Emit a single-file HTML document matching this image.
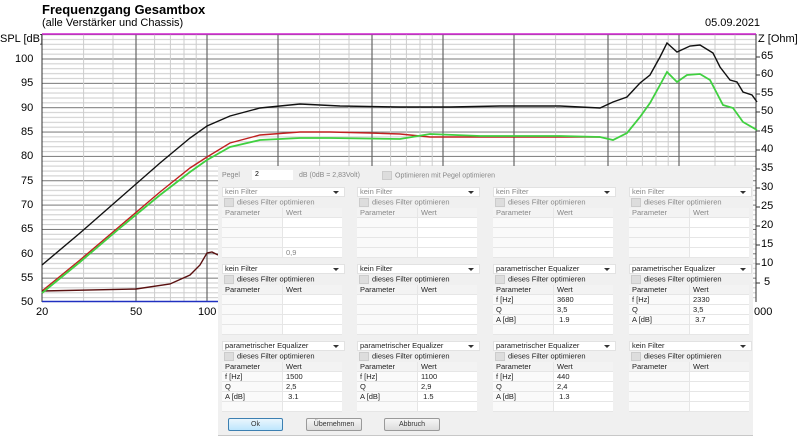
<!DOCTYPE html>
<html><head><meta charset="utf-8"><style>
body{margin:0;width:800px;height:447px;overflow:hidden;background:#fff;font-family:"Liberation Sans",sans-serif;position:relative}
.a{position:absolute;white-space:nowrap}
.t{font-size:11px;color:#000}
#dlg{position:absolute;left:218px;top:166px;width:535px;height:269px;background:#f0f0f0;border-bottom:1px solid #c8c8c8}
.p{position:absolute;width:121px;height:70px;font-size:7.5px;color:#222}
.dd{position:absolute;left:0;top:0;width:119px;height:8px;background:#fff;border:1px solid #e2e2e2;line-height:8px;padding-left:2px;box-sizing:content-box}
.dd:after{content:"";position:absolute;right:5px;top:3px;border:3px solid transparent;border-top:3px solid #333;border-bottom:0}
.cb{position:absolute;left:2px;top:11px;line-height:8px}
.cb i{display:inline-block;width:8px;height:7px;background:#ddd;border:1px solid #ccc;vertical-align:middle;margin-right:3px}
.tb{position:absolute;left:0;top:21px;width:121px}
.r{height:10px;line-height:10px;display:flex}
.r span{display:block;width:60px;padding-left:3px;box-sizing:border-box;border-bottom:1px solid #e6e6e6}
.r span:first-child{background:#fafafa}
.r span+span{background:#fff;border-left:1px solid #e6e6e6}
.h span{background:#f3f3f3!important}
.lt{color:#888}
.btn{position:absolute;top:252px;height:11px;border:1px solid #9a9a9a;background:linear-gradient(#f6f6f6,#dcdcdc);font-size:7px;text-align:center;line-height:11px;border-radius:2px;color:#333}
</style></head><body>
<div class="a" style="left:42px;top:2px;font-size:13px;font-weight:bold">Frequenzgang Gesamtbox</div>
<div class="a t" style="left:42px;top:17px;font-size:11px">(alle Verstärker und Chassis)</div>
<div class="a t" style="left:705px;top:17px">05.09.2021</div>
<div class="a t" style="left:0px;top:33px">SPL [dB]</div>
<div class="a t" style="left:758px;top:33px">Z [Ohm]</div>
<svg class="a" style="left:0;top:0" width="800" height="447">
<defs>
<pattern id="hp" x="0" y="302" width="800" height="24.35" patternUnits="userSpaceOnUse">
<line x1="0" x2="800" y1="0.5" y2="0.5" stroke="#777" stroke-width="1"/>
<line x1="0" x2="800" y1="5.37" y2="5.37" stroke="#ccc"/>
<line x1="0" x2="800" y1="10.24" y2="10.24" stroke="#ccc"/>
<line x1="0" x2="800" y1="15.11" y2="15.11" stroke="#ccc"/>
<line x1="0" x2="800" y1="19.98" y2="19.98" stroke="#ccc"/>
</pattern>
</defs>
<rect x="42" y="34" width="714" height="267" fill="url(#hp)"/>
<g stroke="#ccc" stroke-width="1">
<line x1="83.6" x2="83.6" y1="34" y2="301"/><line x1="113" x2="113" y1="34" y2="301"/>
<line x1="154.6" x2="154.6" y1="34" y2="301"/><line x1="170.4" x2="170.4" y1="34" y2="301"/>
<line x1="184" x2="184" y1="34" y2="301"/><line x1="196.2" x2="196.2" y1="34" y2="301"/>
<line x1="319.6" x2="319.6" y1="34" y2="301"/><line x1="349" x2="349" y1="34" y2="301"/>
<line x1="390.6" x2="390.6" y1="34" y2="301"/><line x1="406.4" x2="406.4" y1="34" y2="301"/>
<line x1="420" x2="420" y1="34" y2="301"/><line x1="432.2" x2="432.2" y1="34" y2="301"/>
<line x1="555.6" x2="555.6" y1="34" y2="301"/><line x1="585" x2="585" y1="34" y2="301"/>
<line x1="626.6" x2="626.6" y1="34" y2="301"/><line x1="642.4" x2="642.4" y1="34" y2="301"/>
<line x1="656" x2="656" y1="34" y2="301"/><line x1="668.2" x2="668.2" y1="34" y2="301"/>
<line x1="715" x2="715" y1="34" y2="301"/><line x1="735" x2="735" y1="34" y2="301"/>
</g>
<g stroke="#666" stroke-width="1.2">
<line x1="136" x2="136" y1="34" y2="301"/><line x1="207" x2="207" y1="34" y2="301"/>
<line x1="278" x2="278" y1="34" y2="301"/><line x1="372" x2="372" y1="34" y2="301"/>
<line x1="443" x2="443" y1="34" y2="301"/><line x1="514" x2="514" y1="34" y2="301"/>
<line x1="608" x2="608" y1="34" y2="301"/><line x1="679" x2="679" y1="34" y2="301"/>
</g>
<line x1="42" x2="42" y1="34" y2="302" stroke="#333"/>
<line x1="756" x2="756" y1="34" y2="302" stroke="#333"/>
<line x1="42" x2="756" y1="34" y2="34" stroke="#d020d0" stroke-width="1.5"/>
<line x1="42" x2="220" y1="301.5" y2="301.5" stroke="#2030c0" stroke-width="1.5"/>
<g stroke="#333">
<line x1="756" x2="760" y1="57" y2="57"/><line x1="756" x2="760" y1="75" y2="75"/><line x1="756" x2="760" y1="94" y2="94"/><line x1="756" x2="760" y1="112" y2="112"/><line x1="756" x2="760" y1="131" y2="131"/><line x1="756" x2="760" y1="150" y2="150"/><line x1="756" x2="760" y1="169" y2="169"/><line x1="756" x2="760" y1="188" y2="188"/><line x1="756" x2="760" y1="207" y2="207"/><line x1="756" x2="760" y1="226" y2="226"/><line x1="756" x2="760" y1="245" y2="245"/><line x1="756" x2="760" y1="264" y2="264"/><line x1="756" x2="760" y1="283" y2="283"/>
</g>
<polyline fill="none" stroke="#111" stroke-width="1.4" points="42,265 80,233 120,198 160,163 190,138 207,126 230,116 260,108 300,104 340,106 400,107 450,107 500,106 560,106 600,108 613,102 627,97 640,83 650,75 660,57 667,43 677,52 690,46 700,45 713,53 720,67 730,80 737,82 743,92 752,95 757,102"/>
<polyline fill="none" stroke="#c02020" stroke-width="1.4" points="42,291 80,260 120,226 160,192 190,168 207,157 230,143 260,135 300,132 330,132 370,133 400,134 430,137 480,137 560,137 600,137"/>
<polyline fill="none" stroke="#5a1010" stroke-width="1.4" points="42,291 136,289 170,284 190,275 200,265 207,253 212,252 218,255"/>
<polyline fill="none" stroke="#40d040" stroke-width="1.8" points="42,293 80,262 120,228 160,195 190,172 207,160 230,147 260,140 300,138 330,138 400,139 430,134 480,136 560,136 600,137 613,140 627,133 640,117 650,103 660,85 667,72 677,82 687,75 700,74 710,80 723,105 733,108 743,122 757,130"/>
</svg>
<div class="a t" style="left:15px;top:53px">100</div>
<div class="a t" style="left:21px;top:77px">95</div>
<div class="a t" style="left:21px;top:102px">90</div>
<div class="a t" style="left:21px;top:126px">85</div>
<div class="a t" style="left:21px;top:150px">80</div>
<div class="a t" style="left:21px;top:175px">75</div>
<div class="a t" style="left:21px;top:199px">70</div>
<div class="a t" style="left:21px;top:223px">65</div>
<div class="a t" style="left:21px;top:248px">60</div>
<div class="a t" style="left:21px;top:272px">55</div>
<div class="a t" style="left:21px;top:296px">50</div>
<div class="a t" style="left:36px;top:306px">20</div>
<div class="a t" style="left:130px;top:306px">50</div>
<div class="a t" style="left:198px;top:306px">100</div>
<div class="a t" style="left:754px;top:306px">000</div>
<div class="a t" style="left:761px;top:50px">65</div><div class="a t" style="left:761px;top:68px">60</div><div class="a t" style="left:761px;top:87px">55</div><div class="a t" style="left:761px;top:105px">50</div><div class="a t" style="left:761px;top:124px">45</div><div class="a t" style="left:761px;top:143px">40</div><div class="a t" style="left:761px;top:162px">35</div><div class="a t" style="left:761px;top:181px">30</div><div class="a t" style="left:761px;top:200px">25</div><div class="a t" style="left:761px;top:219px">20</div><div class="a t" style="left:761px;top:238px">15</div><div class="a t" style="left:761px;top:257px">10</div><div class="a t" style="left:764px;top:276px">5</div>

<div id="dlg">
<div class="a lt" style="left:4px;top:6px;font-size:7px">Pegel</div>
<div class="a" style="left:34px;top:4px;width:41px;height:10px;background:#fff;font-size:7px;line-height:10px;padding-left:3px;box-sizing:border-box">2</div>
<div class="a lt" style="left:81px;top:6px;font-size:7px">dB (0dB = 2,83Volt)</div>
<div class="a lt" style="left:164px;top:5px;font-size:7px"><span style="display:inline-block;width:8px;height:7px;background:#ddd;border:1px solid #ccc;vertical-align:middle;margin-right:3px"></span>Optimieren mit Pegel optimieren</div>

<div class="p lt" style="left:4px;top:21px"><div class="dd">kein Filter</div><div class="cb"><i></i>dieses Filter optimieren</div><div class="tb"><div class="r h"><span>Parameter</span><span>Wert</span></div><div class="r"><span></span><span></span></div><div class="r"><span></span><span></span></div><div class="r"><span></span><span></span></div><div class="r"><span></span><span>0,9</span></div></div></div>
<div class="p lt" style="left:139px;top:21px"><div class="dd">kein Filter</div><div class="cb"><i></i>dieses Filter optimieren</div><div class="tb"><div class="r h"><span>Parameter</span><span>Wert</span></div><div class="r"><span></span><span></span></div><div class="r"><span></span><span></span></div><div class="r"><span></span><span></span></div><div class="r"><span></span><span></span></div></div></div>
<div class="p lt" style="left:275px;top:21px"><div class="dd">kein Filter</div><div class="cb"><i></i>dieses Filter optimieren</div><div class="tb"><div class="r h"><span>Parameter</span><span>Wert</span></div><div class="r"><span></span><span></span></div><div class="r"><span></span><span></span></div><div class="r"><span></span><span></span></div><div class="r"><span></span><span></span></div></div></div>
<div class="p lt" style="left:411px;top:21px"><div class="dd">kein Filter</div><div class="cb"><i></i>dieses Filter optimieren</div><div class="tb"><div class="r h"><span>Parameter</span><span>Wert</span></div><div class="r"><span></span><span></span></div><div class="r"><span></span><span></span></div><div class="r"><span></span><span></span></div><div class="r"><span></span><span></span></div></div></div>

<div class="p" style="left:4px;top:98px"><div class="dd">kein Filter</div><div class="cb"><i></i>dieses Filter optimieren</div><div class="tb"><div class="r h"><span>Parameter</span><span>Wert</span></div><div class="r"><span></span><span></span></div><div class="r"><span></span><span></span></div><div class="r"><span></span><span></span></div><div class="r"><span></span><span></span></div></div></div>
<div class="p" style="left:139px;top:98px"><div class="dd">kein Filter</div><div class="cb"><i></i>dieses Filter optimieren</div><div class="tb"><div class="r h"><span>Parameter</span><span>Wert</span></div><div class="r"><span></span><span></span></div><div class="r"><span></span><span></span></div><div class="r"><span></span><span></span></div><div class="r"><span></span><span></span></div></div></div>
<div class="p" style="left:275px;top:98px"><div class="dd">parametrischer Equalizer</div><div class="cb"><i></i>dieses Filter optimieren</div><div class="tb"><div class="r h"><span>Parameter</span><span>Wert</span></div><div class="r"><span>f [Hz]</span><span>3680</span></div><div class="r"><span>Q</span><span>3,5</span></div><div class="r"><span>A [dB]</span><span>&nbsp;1.9</span></div><div class="r"><span></span><span></span></div></div></div>
<div class="p" style="left:411px;top:98px"><div class="dd">parametrischer Equalizer</div><div class="cb"><i></i>dieses Filter optimieren</div><div class="tb"><div class="r h"><span>Parameter</span><span>Wert</span></div><div class="r"><span>f [Hz]</span><span>2330</span></div><div class="r"><span>Q</span><span>3,5</span></div><div class="r"><span>A [dB]</span><span>&nbsp;3.7</span></div><div class="r"><span></span><span></span></div></div></div>

<div class="p" style="left:4px;top:175px"><div class="dd">parametrischer Equalizer</div><div class="cb"><i></i>dieses Filter optimieren</div><div class="tb"><div class="r h"><span>Parameter</span><span>Wert</span></div><div class="r"><span>f [Hz]</span><span>1500</span></div><div class="r"><span>Q</span><span>2,5</span></div><div class="r"><span>A [dB]</span><span>&nbsp;3.1</span></div><div class="r"><span></span><span></span></div></div></div>
<div class="p" style="left:139px;top:175px"><div class="dd">parametrischer Equalizer</div><div class="cb"><i></i>dieses Filter optimieren</div><div class="tb"><div class="r h"><span>Parameter</span><span>Wert</span></div><div class="r"><span>f [Hz]</span><span>1100</span></div><div class="r"><span>Q</span><span>2,9</span></div><div class="r"><span>A [dB]</span><span>&nbsp;1.5</span></div><div class="r"><span></span><span></span></div></div></div>
<div class="p" style="left:275px;top:175px"><div class="dd">parametrischer Equalizer</div><div class="cb"><i></i>dieses Filter optimieren</div><div class="tb"><div class="r h"><span>Parameter</span><span>Wert</span></div><div class="r"><span>f [Hz]</span><span>440</span></div><div class="r"><span>Q</span><span>2,4</span></div><div class="r"><span>A [dB]</span><span>&nbsp;1.3</span></div><div class="r"><span></span><span></span></div></div></div>
<div class="p" style="left:411px;top:175px"><div class="dd">kein Filter</div><div class="cb"><i></i>dieses Filter optimieren</div><div class="tb"><div class="r h"><span>Parameter</span><span>Wert</span></div><div class="r"><span></span><span></span></div><div class="r"><span></span><span></span></div><div class="r"><span></span><span></span></div><div class="r"><span></span><span></span></div></div></div>

<div class="btn" style="left:10px;width:53px;border-color:#3c7fb1;background:linear-gradient(#eaf6fd,#bee6fd)">Ok</div>
<div class="btn" style="left:88px;width:54px">Übernehmen</div>
<div class="btn" style="left:166px;width:54px">Abbruch</div>
</div>
</body></html>
